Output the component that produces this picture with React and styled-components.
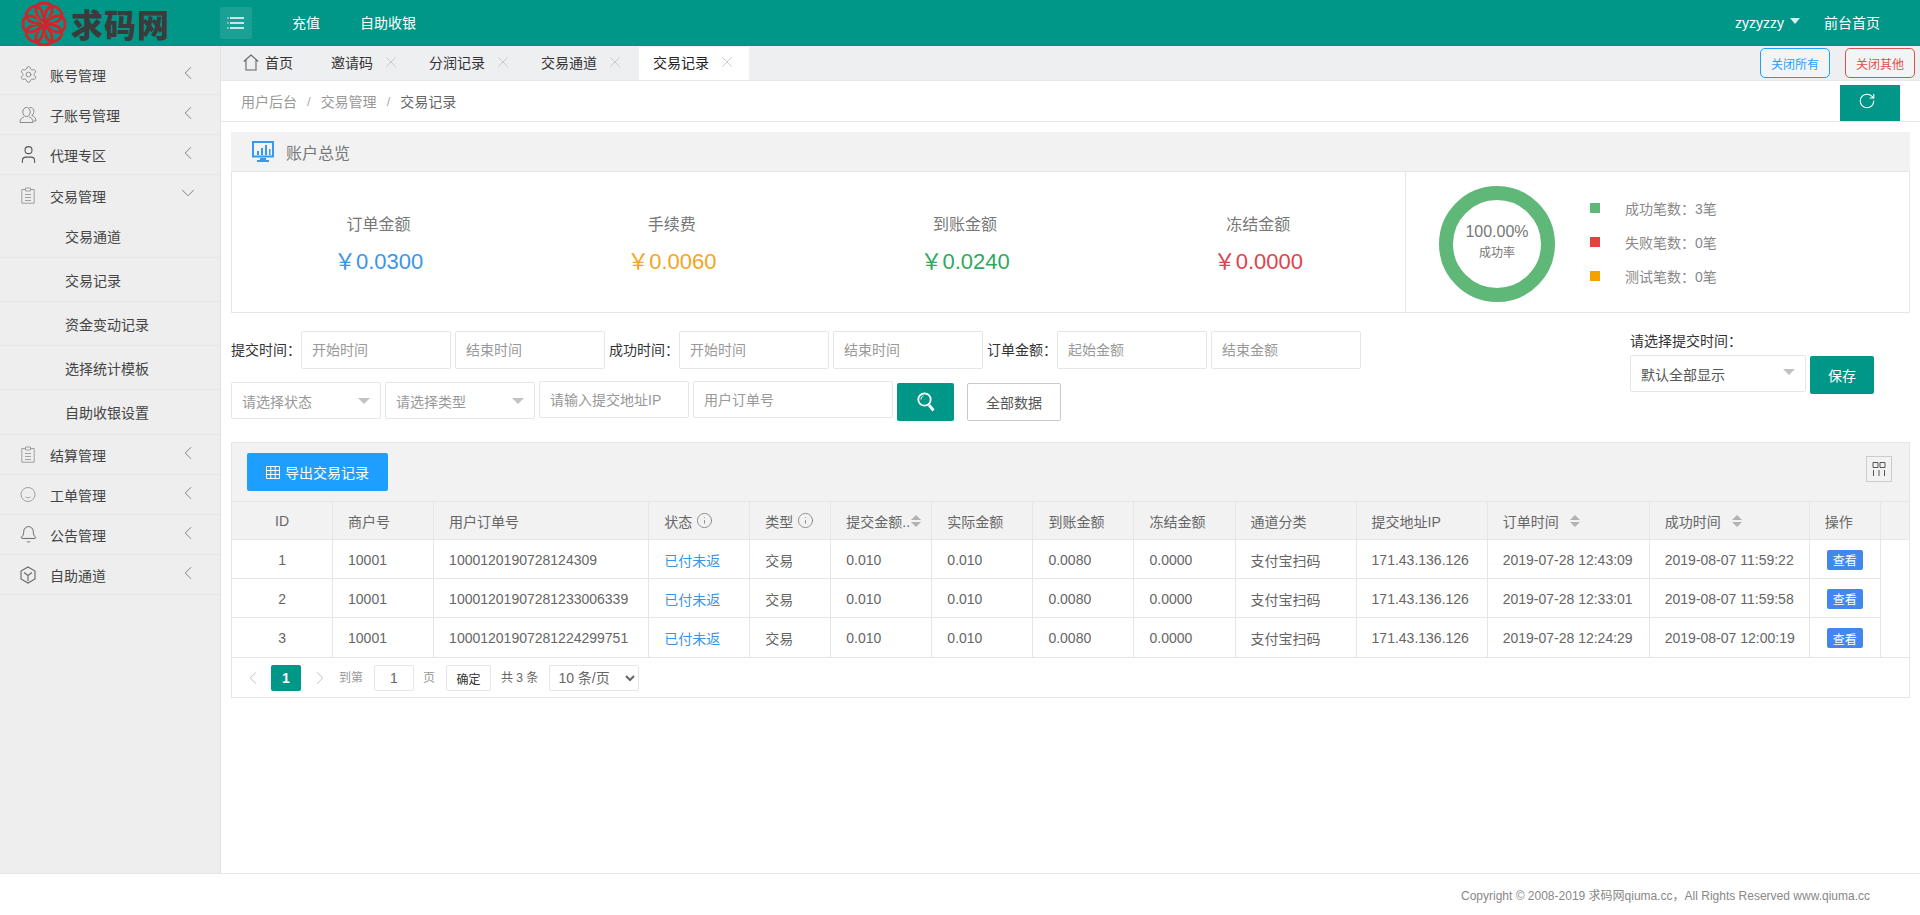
import React from 'react';
import styled, { createGlobalStyle } from 'styled-components';
import { Settings, User, Bell, ChevronLeft, ChevronRight, ChevronDown, X, RotateCw, Info } from 'lucide-react';

const Global = createGlobalStyle`
  html, body { margin: 0; padding: 0; height: 100%; background: #fff; }
  body { font-family: "Liberation Sans", "Noto Sans CJK SC", sans-serif; font-size: 14px; color: #666; overflow: hidden; }
  * { box-sizing: border-box; }
  input::placeholder { color: #999; opacity: 1; }
`;

const Page = styled.div`display: flex; flex-direction: column; height: 915px; width: 1920px; overflow: hidden;`;

/* top bar */
const TopBar = styled.header`flex: 0 0 46px; height: 46px; background: #009688; display: flex; align-items: center; color: #fff; border-bottom: 1px solid #0a8f83;`;
const LogoArea = styled.div`width: 220px; flex: none; display: flex; align-items: center; padding-left: 20px; height: 46px;`;
const LogoMark = styled.svg`width: 48px; height: 46px; flex: none; margin-top: 2px;`;
const LogoText = styled.span`font-family: "Noto Sans CJK SC", sans-serif; font-weight: 900; font-size: 32px; line-height: 46px; letter-spacing: 1px; color: #3b3b3b; margin-left: 3px; white-space: nowrap;`;
const MenuToggle = styled.div`width: 32px; height: 32px; background: rgba(255,255,255,.1); border-radius: 2px; display: flex; align-items: center; justify-content: center; flex: none;`;
const TopLink = styled.span`font-size: 14px; margin-left: ${p => p.$ml}px; line-height: 20px; white-space: nowrap;`;
const TopRight = styled.div`margin-left: auto; display: flex; align-items: center; padding-right: 40px;`;
const Caret = styled.i`display: block; width: 0; height: 0; border-left: 5px solid transparent; border-right: 5px solid transparent; border-top: 6px solid #d9f0ee; margin: -4px 0 0 6px;`;

/* body */
const Body = styled.div`flex: 1; display: flex; min-height: 0;`;
const Sidebar = styled.aside`width: 221px; flex: none; background: #eee; border-right: 1px solid #e2e2e2; padding-top: 9px;`;
const NavRow = styled.div`height: 40px; display: flex; align-items: center; padding: 3px 0 0 20px; border-bottom: ${p => p.$open ? 'none' : '1px solid #e6e6e6'}; color: #333;`;
const NavIcon = styled.span`width: 16px; height: 16px; display: flex; align-items: center; justify-content: center; color: #777; flex: none; margin-top: -3px; & > svg { flex: none; }`;
const NavLabel = styled.span`margin-left: 14px; font-size: 14px; line-height: 20px; color: #444;`;
const NavChevron = styled.span`margin-left: auto; margin-right: 21px; margin-bottom: 7px; display: flex; color: #777;`;
const SubRow = styled.div`height: ${p => p.$h}px; display: flex; align-items: center; padding: 2px 0 0 65px; border-bottom: 1px solid #e6e6e6; color: #444; line-height: 20px;`;

const Main = styled.main`flex: 1; min-width: 0; display: flex; flex-direction: column; background: #fff;`;

/* tabs */
const TabBar = styled.div`height: 35px; flex: none; background: #eeeff1; display: flex; align-items: flex-end; border-bottom: 1px solid #e8e8e8;`;
const TabList = styled.div`display: flex; align-items: stretch; height: 33px;`;
const Tab = styled.div`display: flex; align-items: center; height: 33px; padding: 0 ${p => p.$pr}px 3px ${p => p.$pl}px; background: ${p => p.$active ? '#fff' : 'transparent'}; color: ${p => p.$active ? '#222' : '#333'}; font-size: 14px; white-space: nowrap;`;
const HomeLabel = styled.span`margin-left: 6px;`;
const TabClose = styled.span`margin-left: 9px; margin-right: 1px; display: flex; color: #c4c4c4;`;
const TabActions = styled.div`margin-left: auto; display: flex; gap: 15px; padding: 0 5px 2px 0; align-self: flex-start; margin-top: 2px;`;
const OutlineBtn = styled.div`width: 70px; height: 30px; border: 1px solid ${p => p.$c}; color: ${p => p.$c}; border-radius: 5px; font-size: 12px; display: flex; align-items: center; justify-content: center; background: #f3f4f5;`;

/* breadcrumb */
const CrumbBar = styled.div`height: 41px; flex: none; display: flex; align-items: flex-start; justify-content: space-between; border-bottom: 1px solid #e6e6e6; padding: 0 20px;`;
const Crumbs = styled.div`display: flex; align-items: center; height: 40px; font-size: 14px; color: #999;`;
const CrumbSep = styled.span`margin: 0 10px; color: #aaa; font-size: 13px;`;
const CrumbLast = styled.span`color: #666;`;
const RefreshBtn = styled.div`width: 60px; height: 36px; margin-top: 4px; background: #009688; color: #fff; display: flex; align-items: flex-start; padding: 7px 0 0 18px;`;

const Content = styled.div`flex: 1; padding: 10px 10px 0; min-height: 0;`;

/* overview */
const PanelHead = styled.div`height: 40px; background: #f2f2f2; border-bottom: 1px solid #e6e6e6; display: flex; align-items: center; padding-left: 21px; font-size: 16px; color: #777;`;
const PanelTitle = styled.span`margin-left: 12px;`;
const Overview = styled.div`height: 141px; border: 1px solid #e6e6e6; border-top: none; display: flex;`;
const Stats = styled.div`width: 1174px; flex: none; display: grid; grid-template-columns: repeat(4, 1fr); border-right: 1px solid #e6e6e6;`;
const Stat = styled.div`display: flex; flex-direction: column; align-items: center; justify-content: center; padding-top: 5px;`;
const StatLabel = styled.div`font-size: 16px; line-height: 24px; color: #777;`;
const StatValue = styled.div`font-size: 22px; line-height: 30px; margin-top: 10px; color: ${p => p.$c}; white-space: nowrap;`;
const Chart = styled.div`flex: 1; display: flex; align-items: center; padding: 4px 0 0 33px;`;
const Donut = styled.div`position: relative; width: 116px; height: 116px; flex: none;`;
const DonutSvg = styled.svg`display: block; width: 116px; height: 116px;`;
const DonutText = styled.div`position: absolute; inset: 0; display: flex; flex-direction: column; align-items: center; justify-content: center; color: #777;`;
const DonutPct = styled.div`font-size: 16px; line-height: 22px; margin-top: -5px;`;
const DonutSub = styled.div`font-size: 12px; line-height: 18px; margin-top: 1px;`;
const Legend = styled.div`margin-left: 35px; margin-top: -5px; display: flex; flex-direction: column; gap: 14px;`;
const LegendRow = styled.div`display: flex; align-items: center; height: 20px; color: #888; font-size: 14px;`;
const Swatch = styled.i`width: 10px; height: 10px; background: ${p => p.$c}; margin-right: 25px; flex: none;`;

/* filters */
const Filters = styled.div`display: flex; justify-content: space-between; margin-top: 18px; padding-right: 36px;`;
const FilterRows = styled.div`display: flex; flex-direction: column; gap: 12px;`;
const FilterRow = styled.div`display: flex; align-items: flex-start; gap: 4px; height: ${p => p.$h}px;`;
const FieldLabel = styled.label`width: 66px; flex: none; line-height: 38px; color: #333; font-size: 14px; white-space: nowrap;`;
const TextInput = styled.input`width: ${p => p.$w || 150}px; height: ${p => p.$hh || 38}px; border: 1px solid #e6e6e6; padding: 0 10px; font: inherit; font-size: 14px; color: #666; background: #fff; outline: none; border-radius: 2px; flex: none;`;
const FakeSelect = styled.div`width: ${p => p.$w}px; height: 37px; margin-top: ${p => p.$mt || 0}px; border: 1px solid #e6e6e6; border-radius: 2px; background: #fff; display: flex; align-items: center; justify-content: space-between; padding: 0 10px; color: ${p => p.$c || '#999'}; font-size: 14px; flex: none;`;
const SelectCaret = styled.i`width: 0; height: 0; border-left: 6px solid transparent; border-right: 6px solid transparent; border-top: 6px solid #c2c2c2; margin-top: ${p => p.$mt || 0}px;`;
const PrimaryBtn = styled.div`width: ${p => p.$w}px; height: 38px; margin-top: ${p => p.$mt}px; background: #009688; color: #fff; border-radius: 2px; display: flex; align-items: center; justify-content: center; font-size: 14px; flex: none;`;
const GhostBtn = styled.div`width: 94px; height: 38px; margin: 2px 0 0 9px; border: 1px solid #c9c9c9; border-radius: 2px; display: flex; align-items: center; justify-content: center; color: #555; font-size: 14px; flex: none;`;
const SaveBlock = styled.div`width: 244px; flex: none;`;
const SaveLabel = styled.div`line-height: 20px; color: #333; font-size: 14px;`;
const SaveRow = styled.div`display: flex; gap: 4px; margin-top: 4px;`;

/* table */
const TablePanel = styled.div`margin-top: 21px; border: 1px solid #e6e6e6; height: 256px;`;
const Toolbar = styled.div`height: 59px; background: #f2f2f2; border-bottom: 1px solid #e6e6e6; display: flex; align-items: flex-start; justify-content: space-between; padding: 10px 17px 0 15px;`;
const ExportBtn = styled.div`width: 141px; height: 38px; background: #1e9fff; color: #fff; border-radius: 2px; display: flex; align-items: center; justify-content: center; gap: 5px; font-size: 14px;`;
const ColsBtn = styled.div`width: 26px; height: 26px; border: 1px solid #ccc; margin-top: 3px; display: flex; align-items: center; justify-content: center; color: #555;`;
const Table = styled.table`width: 100%; table-layout: fixed; border-collapse: separate; border-spacing: 0; font-size: 14px;`;
const Th = styled.th`height: 38px; padding: 0 ${p => p.$center ? 0 : 15}px; background: #f2f2f2; font-weight: 400; color: #666; text-align: ${p => p.$center ? 'center' : 'left'}; border-right: 1px solid #e6e6e6; border-bottom: 1px solid #e6e6e6; white-space: nowrap; overflow: hidden; &:last-child { border-right: none; }`;
const HeadInner = styled.span`display: inline-flex; align-items: center; gap: ${p => p.$gap}px;`;
const InfoMark = styled.span`display: flex; color: #777;`;
const Td = styled.td`height: 39px; padding: 1px ${p => p.$center ? 0 : 15}px 0; color: ${p => p.$link ? '#3b95e8' : '#666'}; text-align: ${p => p.$center ? 'center' : 'left'}; border-right: 1px solid #e6e6e6; border-bottom: 1px solid #e6e6e6; white-space: nowrap; tr:last-child & { border-bottom: none; }`;
const FillerTd = styled.td`border: none;`;
const Sorter = styled.span`display: inline-flex; flex-direction: column; gap: 2px;`;
const SortUp = styled.i`width: 0; height: 0; border-left: 5px solid transparent; border-right: 5px solid transparent; border-bottom: 5px solid #b2b2b2;`;
const SortDown = styled.i`width: 0; height: 0; border-left: 5px solid transparent; border-right: 5px solid transparent; border-top: 5px solid #b2b2b2;`;
const ViewBtn = styled.span`display: inline-flex; align-items: center; justify-content: center; width: 36px; height: 20px; background: #4287ed; color: #fff; font-size: 12px; border-radius: 2px; margin: 0 0 0 2px;`;

/* pagination */
const Pager = styled.div`height: 40px; border-top: 1px solid #e6e6e6; display: flex; align-items: flex-start; padding-top: 7px; font-size: 12px; color: #999;`;
const PagerArrow = styled.span`display: flex; height: 26px; align-items: center; color: #bbb; margin: 0 ${p => p.$mr}px 0 ${p => p.$ml}px;`;
const PageNum = styled.span`width: 30px; height: 26px; background: #009688; color: #fff; border-radius: 2px; display: flex; align-items: center; justify-content: center; font-size: 14px; font-weight: 700;`;
const PagerText = styled.span`line-height: 26px; margin-left: ${p => p.$ml}px; white-space: nowrap; color: ${p => p.$c || '#999'}; font-size: 12px;`;
const PagerInput = styled.input`width: 40px; height: 26px; margin-left: 11px; border: 1px solid #e6e6e6; border-radius: 2px; text-align: center; font: inherit; font-size: 14px; color: #666; outline: none; padding: 0;`;
const PagerBtn = styled.div`width: 45px; height: 26px; margin-left: 11px; border: 1px solid #e6e6e6; border-radius: 2px; background: #fff; color: #333; display: flex; align-items: center; justify-content: center; font-size: 12px;`;
const PagerSelect = styled.select`width: 90px; height: 26px; margin-left: 11px; border: 1px solid #e6e6e6; background: #fff; color: #666; font: inherit; font-size: 14px; padding: 0 4px; border-radius: 2px; outline: none;`;

const Footer = styled.footer`height: 42px; flex: none; border-top: 1px solid #e6e6e6; display: flex; align-items: center; justify-content: flex-end; padding: 0 50px 0 0; font-size: 12px; color: #888; background: #fff;`;

/* drawings */
const Flower = () => (
  <LogoMark viewBox="0 0 48 46" fill="none">
    {[0, 45, 90, 135, 180, 225, 270, 315].map(a => (
      <g key={a} transform={`rotate(${a} 24 23)`}>
        <path d="M24 23C18 17 14 10 17 5 19 1 29 1 31 5 34 10 30 17 24 23Z" stroke="#d2232a" strokeWidth="2.8" />
        <path d="M24 23C23 17 23 12 25 7" stroke="#7a6a5a" strokeWidth="1" />
      </g>
    ))}
  </LogoMark>
);
const Burger = () => (
  <svg width="18" height="14" viewBox="0 0 18 14" fill="none" stroke="#fff" strokeWidth="1.4">
    <path d="M3 2h14M3 7h14M3 12h14" /><path d="M.5 2h1M.5 7h1M.5 12h1" />
  </svg>
);
const HomeIcon = () => (
  <svg width="16" height="17" viewBox="0 0 16 17" fill="none" stroke="#666" strokeWidth="1.1">
    <path d="M.8 7.5 8 1l7.2 6.5M3 6v10h10V6" />
  </svg>
);
const UsersIcon = () => (
  <svg width="18" height="18" viewBox="0 0 18 18" fill="none" stroke="#8a8a8a" strokeWidth="1">
    <ellipse cx="7.5" cy="6" rx="3.7" ry="4.6" />
    <path d="M1 16.5c0-3.5 2.2-5 4-5.600M10 10.900c2 .6 4 2.100 4 5.600H1" />
    <path d="M10.500 1.600c2.200-.6 4.400 1 4.400 3.800 0 1.800-.8 3.300-2.200 4 2.200.8 4.200 2.400 4.200 5.600h-2.400" />
  </svg>
);
const ClipIcon = () => (
  <svg width="14" height="17" viewBox="0 0 14 17" fill="none" stroke="#a0a0a0" strokeWidth="1">
    <path d="M4 2.500H.8v13.700h12.400V2.500H10" /><path d="M4.500 1h5v3h-5zM4 7.500h6M4 10.500h6M4 13.500h6" />
  </svg>
);
const FaceIcon = () => (
  <svg width="16" height="17" viewBox="0 0 16 17" fill="none" stroke="#a0a0a0" strokeWidth="1">
    <circle cx="8" cy="8.500" r="7" /><path d="M5.500 11c1.500 1 3.500 1 5 0" />
  </svg>
);
const CubeIcon = () => (
  <svg width="16" height="18" viewBox="0 0 16 18" fill="none" stroke="#666" strokeWidth="1.1">
    <path d="M8 1l7 4v8l-7 4-7-4V5z" /><path d="M4 6.500l4 3 4-3M8 9.500V15" />
  </svg>
);
const MonitorIcon = () => (
  <svg width="22" height="22" viewBox="0 0 22 22" fill="none">
    <path d="M1 1h20v14.500H1z" stroke="#3a97f0" strokeWidth="2" />
    <path d="M5 10h2v4H5zM9 7h2v7H9zM13 4h2v10h-2zM17 8h1.500v6H17z" fill="#3a97f0" />
    <path d="M8 17h6v2h3v2H5v-2h3z" fill="#3a97f0" />
  </svg>
);
const GridIcon = () => (
  <svg width="14" height="13" viewBox="0 0 14 13" fill="none" stroke="#fff" strokeWidth="1">
    <path d="M.5.500h13v12H.5zM.5 4.500h13M.5 8.500h13M4.800.500v12M9.200.500v12" />
  </svg>
);
const ColsIcon = () => (
  <svg width="14" height="14" viewBox="0 0 14 14" fill="none" stroke="#555" strokeWidth="1">
    <path d="M1 .5h5v5H1zM8 .5h5v5H8zM1.500 8v6M7 8v6M12.500 8v6" />
  </svg>
);
const SearchIcon = () => (
  <svg width="18" height="20" viewBox="0 0 18 20" fill="none" stroke="#fff">
    <circle cx="7.500" cy="7.500" r="6.200" strokeWidth="1.800" />
    <path d="M12 13l4.500 5.500" strokeWidth="2.800" />
    <path d="M4 7.500c0-2 1-3.200 2.400-3.700" strokeWidth="1" />
  </svg>
);
const Sort = () => <Sorter><SortUp /><SortDown /></Sorter>;
const InfoGlyph = () => <InfoMark><Info size={17} strokeWidth={1.100} /></InfoMark>;
const CloseX = () => <TabClose><X size={18} strokeWidth={1.100} /></TabClose>;

const nav1 = [
  [<Settings size={19} strokeWidth={1} />, '账号管理'],
  [<UsersIcon />, '子账号管理'],
  [<User size={21} strokeWidth={1.200} color="#555" />, '代理专区'],
];
const subs = [['交易通道', 43], ['交易记录', 44], ['资金变动记录', 44], ['选择统计模板', 44], ['自助收银设置', 45]];
const nav2 = [
  [<ClipIcon />, '结算管理'],
  [<FaceIcon />, '工单管理'],
  [<Bell size={19} strokeWidth={1.100} color="#555" />, '公告管理'],
  [<CubeIcon />, '自助通道'],
];
const tabs = ['邀请码', '分润记录', '交易通道'];
const stats = [
  ['订单金额', '￥0.0300', '#3b95e8'],
  ['手续费', '￥0.0060', '#f4a522'],
  ['到账金额', '￥0.0240', '#2fa95f'],
  ['冻结金额', '￥0.0000', '#e0434e'],
];
const legend = [['#5fb878', '成功笔数：3笔'], ['#e8403f', '失败笔数：0笔'], ['#f5a100', '测试笔数：0笔']];
const rows = [
  [1, '1000120190728124309', '2019-07-28 12:43:09', '2019-08-07 11:59:22'],
  [2, '1000120190728123300633 9'.replace(' ', ''), '2019-07-28 12:33:01', '2019-08-07 11:59:58'],
  [3, '1000120190728122429975 1'.replace(' ', ''), '2019-07-28 12:24:29', '2019-08-07 12:00:19'],
];
const widths = [101, 101, 215, 101, 81, 101, 101, 101, 101, 121, 131, 162, 160, 71, 28];

const NavItem = ({ icon, label, open }) => (
  <NavRow $open={open}>
    <NavIcon>{icon}</NavIcon>
    <NavLabel>{label}</NavLabel>
    <NavChevron>{open ? <ChevronDown size={22} strokeWidth={1} /> : <ChevronLeft size={22} strokeWidth={1} />}</NavChevron>
  </NavRow>
);

export default function App() {
  return (
    <Page>
      <Global />
      <TopBar>
        <LogoArea><Flower /><LogoText>求码网</LogoText></LogoArea>
        <MenuToggle><Burger /></MenuToggle>
        <TopLink $ml={40}>充值</TopLink>
        <TopLink $ml={40}>自助收银</TopLink>
        <TopRight>
          <TopLink $ml={0}>zyzyzzy</TopLink><Caret />
          <TopLink $ml={24}>前台首页</TopLink>
        </TopRight>
      </TopBar>
      <Body>
        <Sidebar>
          {nav1.map(([i, l]) => <NavItem key={l} icon={i} label={l} />)}
          <NavItem icon={<ClipIcon />} label="交易管理" open />
          {subs.map(([l, h]) => <SubRow key={l} $h={h}>{l}</SubRow>)}
          {nav2.map(([i, l]) => <NavItem key={l} icon={i} label={l} />)}
        </Sidebar>
        <Main>
          <TabBar>
            <TabList>
              <Tab $pl={22} $pr={24}><HomeIcon /><HomeLabel>首页</HomeLabel></Tab>
              {tabs.map(l => (
                <Tab key={l} $pl={14} $pr={14}>{l}<CloseX /></Tab>
              ))}
              <Tab $active $pl={14} $pr={12}>交易记录<CloseX /></Tab>
            </TabList>
            <TabActions>
              <OutlineBtn $c="#1e9fff">关闭所有</OutlineBtn>
              <OutlineBtn $c="#d9534f">关闭其他</OutlineBtn>
            </TabActions>
          </TabBar>
          <CrumbBar>
            <Crumbs>
              用户后台<CrumbSep>/</CrumbSep>交易管理<CrumbSep>/</CrumbSep><CrumbLast>交易记录</CrumbLast>
            </Crumbs>
            <RefreshBtn><RotateCw size={18} strokeWidth={1.500} /></RefreshBtn>
          </CrumbBar>
          <Content>
            <PanelHead><MonitorIcon /><PanelTitle>账户总览</PanelTitle></PanelHead>
            <Overview>
              <Stats>
                {stats.map(([l, v, c]) => (
                  <Stat key={l}><StatLabel>{l}</StatLabel><StatValue $c={c}>{v}</StatValue></Stat>
                ))}
              </Stats>
              <Chart>
                <Donut>
                  <DonutSvg viewBox="0 0 116 116"><circle cx="58" cy="58" r="51" fill="none" stroke="#5fb878" strokeWidth="14" /></DonutSvg>
                  <DonutText><DonutPct>100.00%</DonutPct><DonutSub>成功率</DonutSub></DonutText>
                </Donut>
                <Legend>
                  {legend.map(([c, t]) => <LegendRow key={t}><Swatch $c={c} />{t}</LegendRow>)}
                </Legend>
              </Chart>
            </Overview>

            <Filters>
              <FilterRows>
                <FilterRow $h={38}>
                  <FieldLabel>提交时间：</FieldLabel>
                  <TextInput placeholder="开始时间" />
                  <TextInput placeholder="结束时间" />
                  <FieldLabel>成功时间：</FieldLabel>
                  <TextInput placeholder="开始时间" />
                  <TextInput placeholder="结束时间" />
                  <FieldLabel>订单金额：</FieldLabel>
                  <TextInput placeholder="起始金额" />
                  <TextInput placeholder="结束金额" />
                </FilterRow>
                <FilterRow $h={40}>
                  <FakeSelect $w={150} $mt={1}>请选择状态<SelectCaret /></FakeSelect>
                  <FakeSelect $w={150} $mt={1}>请选择类型<SelectCaret /></FakeSelect>
                  <TextInput $hh={37} placeholder="请输入提交地址IP" />
                  <TextInput $w={200} $hh={37} placeholder="用户订单号" />
                  <PrimaryBtn $w={57} $mt={2}><SearchIcon /></PrimaryBtn>
                  <GhostBtn>全部数据</GhostBtn>
                </FilterRow>
              </FilterRows>
              <SaveBlock>
                <SaveLabel>请选择提交时间：</SaveLabel>
                <SaveRow>
                  <FakeSelect $w={176} $c="#555">默认全部显示<SelectCaret $mt={-3} /></FakeSelect>
                  <PrimaryBtn $w={64} $mt={1}>保存</PrimaryBtn>
                </SaveRow>
              </SaveBlock>
            </Filters>

            <TablePanel>
              <Toolbar>
                <ExportBtn><GridIcon />导出交易记录</ExportBtn>
                <ColsBtn><ColsIcon /></ColsBtn>
              </Toolbar>
              <Table>
                <colgroup>{widths.map((w, i) => <col key={i} width={w} />)}</colgroup>
                <thead>
                  <tr>
                    <Th $center>ID</Th>
                    <Th>商户号</Th>
                    <Th>用户订单号</Th>
                    <Th><HeadInner $gap={4}>状态<InfoGlyph /></HeadInner></Th>
                    <Th><HeadInner $gap={4}>类型<InfoGlyph /></HeadInner></Th>
                    <Th><HeadInner $gap={1}>提交金额..<Sort /></HeadInner></Th>
                    <Th>实际金额</Th>
                    <Th>到账金额</Th>
                    <Th>冻结金额</Th>
                    <Th>通道分类</Th>
                    <Th>提交地址IP</Th>
                    <Th><HeadInner $gap={11}>订单时间<Sort /></HeadInner></Th>
                    <Th><HeadInner $gap={11}>成功时间<Sort /></HeadInner></Th>
                    <Th>操作</Th>
                    <Th />
                  </tr>
                </thead>
                <tbody>
                  {rows.map(([id, no, t1, t2]) => (
                    <tr key={id}>
                      <Td $center>{id}</Td>
                      <Td>10001</Td>
                      <Td>{no}</Td>
                      <Td $link>已付未返</Td>
                      <Td>交易</Td>
                      <Td>0.010</Td>
                      <Td>0.010</Td>
                      <Td>0.0080</Td>
                      <Td>0.0000</Td>
                      <Td>支付宝扫码</Td>
                      <Td>171.43.136.126</Td>
                      <Td>{t1}</Td>
                      <Td>{t2}</Td>
                      <Td><ViewBtn>查看</ViewBtn></Td>
                      <FillerTd />
                    </tr>
                  ))}
                </tbody>
              </Table>
              <Pager>
                <PagerArrow $ml={10} $mr={7}><ChevronLeft size={22} strokeWidth={1} /></PagerArrow>
                <PageNum>1</PageNum>
                <PagerArrow $ml={8} $mr={8}><ChevronRight size={22} strokeWidth={1} /></PagerArrow>
                <PagerText $ml={0}>到第</PagerText>
                <PagerInput defaultValue="1" />
                <PagerText $ml={9}>页</PagerText>
                <PagerBtn>确定</PagerBtn>
                <PagerText $ml={10} $c="#666">共 3 条</PagerText>
                <PagerSelect defaultValue="10">
                  <option value="10">10 条/页</option>
                  <option value="20">20 条/页</option>
                </PagerSelect>
              </Pager>
            </TablePanel>
          </Content>
        </Main>
      </Body>
      <Footer>Copyright © 2008-2019 求码网qiuma.cc，All Rights Reserved www.qiuma.cc</Footer>
    </Page>
  );
}
